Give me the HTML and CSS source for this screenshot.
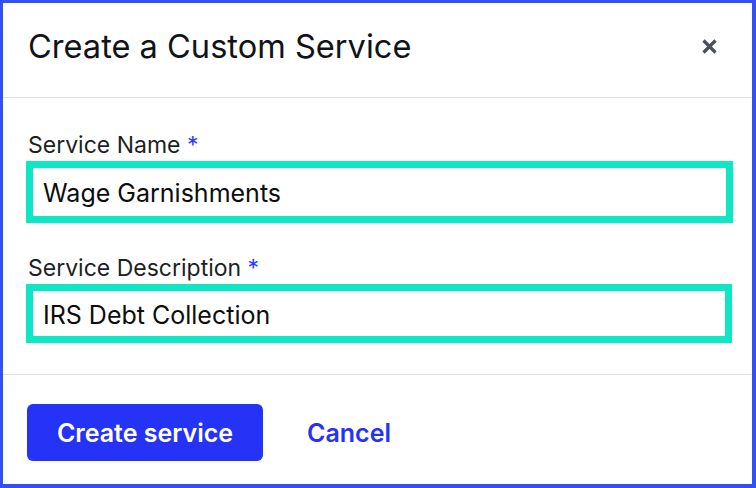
FILE: index.html
```html
<!DOCTYPE html>
<html>
<head>
<meta charset="utf-8">
<link rel="stylesheet" href="styles.css">
</head>
<body>
<div class="dialog">
  <div class="header">
    <h1 class="title">Create a Custom Service</h1>
    <button class="close" aria-label="Close">
      <svg width="15" height="15" viewBox="0 0 15 15"><path d="M1.5 1.5 L13.5 13.5 M13.5 1.5 L1.5 13.5" stroke="#4a4f58" stroke-width="3.2" stroke-linecap="butt"/></svg>
    </button>
  </div>
  <div class="body">
    <div class="field">
      <label class="label">Service Name <span class="req">*</span></label>
      <div class="input">Wage Garnishments</div>
    </div>
    <div class="field second">
      <label class="label">Service Description <span class="req">*</span></label>
      <div class="input input2">IRS Debt Collection</div>
    </div>
  </div>
  <div class="footer">
    <button class="primary">Create service</button>
    <button class="link">Cancel</button>
  </div>
</div>
</body>
</html>
```
FILE: styles.css
```css
html, body { margin: 0; padding: 0; }
body { font-family: Inter, "Noto Sans", sans-serif; background: #fff; }
.dialog {
  width: 756px; height: 488px; box-sizing: border-box;
  border-style: solid; border-color: #3350f7;
  border-width: 3px 4px 4px 3px;
  display: flex; flex-direction: column;
}
.header {
  height: 95px; box-sizing: border-box;
  border-bottom: 1px solid #e0e0e0;
  display: flex; align-items: center; justify-content: space-between;
  padding: 0 35px 8px 25px;
}
.title { margin: 0; font-size: 32.6px; font-weight: 400; color: #111318; }
.close { background: none; border: 0; padding: 0; width: 15px; height: 15px; display: flex; margin-top: 1px; }
.body { height: 277px; box-sizing: border-box; border-bottom: 1px solid #e0e0e0; padding: 33px 19px 0 23px; }
.label { display: block; font-size: 23px; color: #1c1f26; line-height: 28px; margin-bottom: 2px; padding-left: 2px; }
.req { color: #2b3ef5; }
.input {
  height: 62px; box-sizing: border-box; border: 7px solid #0ee6c6;
  padding: 2px 10px 0; display: flex; align-items: center;
  font-size: 25px; color: #0d0d0d;
}
.field.second { margin-top: 31px; }
.input2 { height: 59px; margin-right: 1px; }
.footer { flex: 1; display: flex; align-items: center; padding: 0 24px; gap: 44px; }
.primary {
  width: 236px; height: 57px; border: 0; border-radius: 6px;
  background: #2433f6; color: #fff; font-family: inherit;
  font-size: 25px; font-weight: 600; margin-top: 6px; padding: 0;
}
.link { background: none; border: 0; padding: 0; font-family: inherit; font-size: 25px; font-weight: 600; color: #2433f6; margin-top: 6px; }
```
